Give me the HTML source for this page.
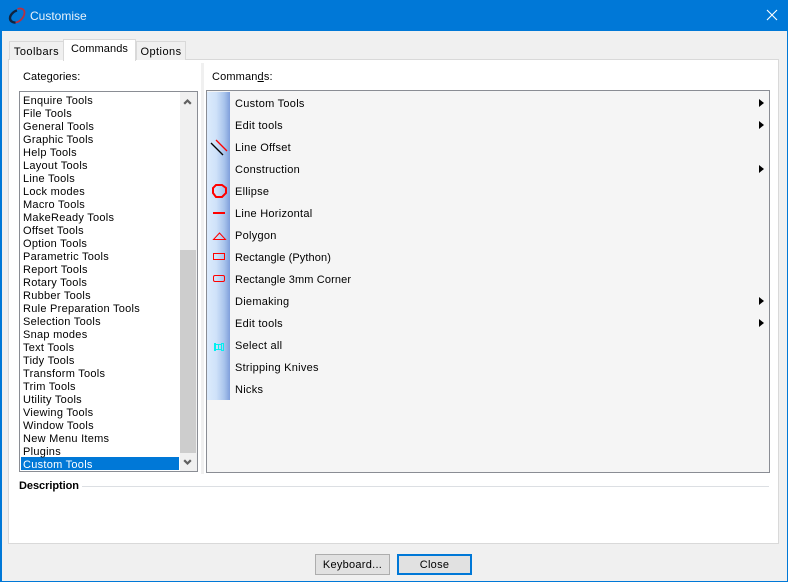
<!DOCTYPE html>
<html><head><meta charset="utf-8">
<style>
html,body{margin:0;padding:0;width:788px;height:582px;overflow:hidden;background:#f0f0f0}
body{position:relative;font-family:"Liberation Sans",sans-serif;font-size:11px;color:#000;letter-spacing:.27px}
div{position:absolute;white-space:nowrap;box-sizing:border-box}
.li{left:23px;height:13px;line-height:15px}
.cm{left:235px;height:22px;line-height:24px}
.ar{left:759px;width:0;height:0;border-left:5px solid #000;border-top:4px solid transparent;border-bottom:4px solid transparent}
.tab{line-height:20px;text-align:center;background:#f0f0f0;border:1px solid #d9d9d9;border-bottom:none;letter-spacing:.45px}
u{text-decoration:underline}
</style></head><body>
<div style="left:0;top:0;width:788px;height:582px;border:1px solid #0078d7;border-width:0 1px 1px 2px"></div>
<div style="left:0;top:0;width:788px;height:31px;background:#0078d7"></div>
<svg style="position:absolute;left:8px;top:7px" width="18" height="18" viewBox="0 0 18 18" fill="none">
<path d="M9.500 2C13 .8 16.500 2 16.500 5.500C16.500 10 12 15 7.500 15.500" stroke="#b83040" stroke-width="1.800"/>
<path d="M9 3.500C5 4.500 1.800 8.500 2 11.500C2.200 14 4.500 15.700 7.500 15.500" stroke="#10233f" stroke-width="2.400"/>
</svg>
<div style="left:30px;top:8px;height:15px;line-height:16px;font-size:12px;color:#e8f2fb;letter-spacing:0">Customise</div>
<svg style="position:absolute;left:766px;top:9px" width="12" height="12" viewBox="0 0 12 12"><path d="M1 1L11 11M11 1L1 11" stroke="#fff" stroke-width="1.100"/></svg>

<div style="left:8px;top:59px;width:771px;height:485px;background:#fff;border:1px solid #d9d9d9"></div>
<div class="tab" style="left:9px;top:41px;width:55px;height:19px">Toolbars</div>
<div class="tab" style="left:136px;top:41px;width:50px;height:19px">Options</div>
<div class="tab" style="left:63px;top:39px;width:73px;height:22px;background:#fff;line-height:19px;letter-spacing:.1px">Commands</div>

<div style="left:201px;top:63px;width:3px;height:411px;background:#f0f0f0"></div>
<div style="left:23px;top:69px;height:14px;line-height:16px;letter-spacing:.1px">Cate<u>g</u>ories:</div>
<div style="left:212px;top:69px;height:14px;line-height:16px;letter-spacing:.15px">Comman<u>d</u>s:</div>

<div style="left:19px;top:91px;width:179px;height:381px;background:#fff;border:1px solid #8a8d94"></div>
<div style="left:180px;top:92px;width:17px;height:379px;background:#f0f0f0"></div>
<div style="left:180px;top:250px;width:16px;height:203px;background:#cdcdcd"></div>
<svg style="position:absolute;left:183px;top:97px" width="10" height="9"><path d="M1.200 6.800L4.500 3.500L7.800 6.800" fill="none" stroke="#606060" stroke-width="2.200"/></svg>
<svg style="position:absolute;left:183px;top:459px" width="10" height="8"><path d="M1.200 1.200L4.500 4.500L7.800 1.200" fill="none" stroke="#606060" stroke-width="2.200"/></svg>
<div style="left:21px;top:457px;width:158px;height:13px;background:#0078d7"></div>
<div class="li" style="top:94px">Enquire Tools</div>
<div class="li" style="top:107px">File Tools</div>
<div class="li" style="top:120px">General Tools</div>
<div class="li" style="top:133px">Graphic Tools</div>
<div class="li" style="top:146px">Help Tools</div>
<div class="li" style="top:159px">Layout Tools</div>
<div class="li" style="top:172px">Line Tools</div>
<div class="li" style="top:185px">Lock modes</div>
<div class="li" style="top:198px">Macro Tools</div>
<div class="li" style="top:211px">MakeReady Tools</div>
<div class="li" style="top:224px">Offset Tools</div>
<div class="li" style="top:237px">Option Tools</div>
<div class="li" style="top:250px">Parametric Tools</div>
<div class="li" style="top:263px">Report Tools</div>
<div class="li" style="top:276px">Rotary Tools</div>
<div class="li" style="top:289px">Rubber Tools</div>
<div class="li" style="top:302px">Rule Preparation Tools</div>
<div class="li" style="top:315px">Selection Tools</div>
<div class="li" style="top:328px">Snap modes</div>
<div class="li" style="top:341px">Text Tools</div>
<div class="li" style="top:354px">Tidy Tools</div>
<div class="li" style="top:367px">Transform Tools</div>
<div class="li" style="top:380px">Trim Tools</div>
<div class="li" style="top:393px">Utility Tools</div>
<div class="li" style="top:406px">Viewing Tools</div>
<div class="li" style="top:419px">Window Tools</div>
<div class="li" style="top:432px">New Menu Items</div>
<div class="li" style="top:445px">Plugins</div>
<div class="li" style="top:458px;color:#fff">Custom Tools</div>

<div style="left:206px;top:90px;width:564px;height:383px;background:#f5f5f5;border:1px solid #8a8d94"></div>
<div style="left:207px;top:92px;width:23px;height:308px;background:linear-gradient(90deg,#dcebfc 0%,#cfe2f9 40%,#a9c4ec 75%,#7f9fdb 100%)"></div>
<div class="cm" style="top:92px">Custom Tools</div><div class="ar" style="top:99px"></div>
<div class="cm" style="top:114px">Edit tools</div><div class="ar" style="top:121px"></div>
<div class="cm" style="top:136px">Line Offset</div>
<div class="cm" style="top:158px">Construction</div><div class="ar" style="top:165px"></div>
<div class="cm" style="top:180px">Ellipse</div>
<div class="cm" style="top:202px">Line Horizontal</div>
<div class="cm" style="top:224px">Polygon</div>
<div class="cm" style="top:246px;letter-spacing:.1px">Rectangle (Python)</div>
<div class="cm" style="top:268px;letter-spacing:.12px">Rectangle 3mm Corner</div>
<div class="cm" style="top:290px">Diemaking</div><div class="ar" style="top:297px"></div>
<div class="cm" style="top:312px">Edit tools</div><div class="ar" style="top:319px"></div>
<div class="cm" style="top:334px">Select all</div>
<div class="cm" style="top:356px">Stripping Knives</div>
<div class="cm" style="top:378px">Nicks</div>

<svg style="position:absolute;left:208px;top:92px" width="24" height="308" viewBox="0 0 24 308" fill="none" shape-rendering="crispEdges">
<path d="M3 51L15 63" stroke="#000" stroke-width="1.300" shape-rendering="auto"/>
<path d="M8 48L19 59" stroke="#f00" stroke-width="1.300" shape-rendering="auto"/>
<path d="M8 93H14L18 96V101L14 105H8L5 101V96Z" stroke="#f00" stroke-width="2" shape-rendering="auto"/>
<rect x="5" y="120" width="12" height="2" fill="#f00"/>
<path d="M5.500 147.500L11.500 141L17.500 147.500Z" stroke="#f00" stroke-width="1" shape-rendering="auto"/>
<rect x="5.500" y="161.500" width="11" height="6" stroke="#f00"/>
<rect x="5.500" y="183.500" width="11" height="6" rx="1.500" stroke="#f00" shape-rendering="auto"/>
<rect x="6" y="251" width="2" height="8" fill="#00f0f0"/>
<rect x="13.500" y="251.500" width="2" height="7" stroke="#00f0f0"/>
<rect x="8" y="252" width="5" height="1" fill="#00f0f0"/>
<rect x="8" y="257" width="5" height="1" fill="#00f0f0"/>
<rect x="10" y="252" width="1" height="6" fill="#00f0f0"/>
</svg>

<div style="left:19px;top:478px;height:14px;line-height:16px;font-weight:bold;letter-spacing:-.05px;background:#fff">Description</div>
<div style="left:82px;top:486px;width:687px;height:1px;background:#dcdfe3"></div>

<div style="left:315px;top:554px;width:75px;height:21px;background:#e1e1e1;border:1px solid #adadad;text-align:center;line-height:20px">Keyboard...</div>
<div style="left:397px;top:554px;width:75px;height:21px;background:#e1e1e1;border:2px solid #0078d7;text-align:center;line-height:18px">Close</div>
</body></html>
